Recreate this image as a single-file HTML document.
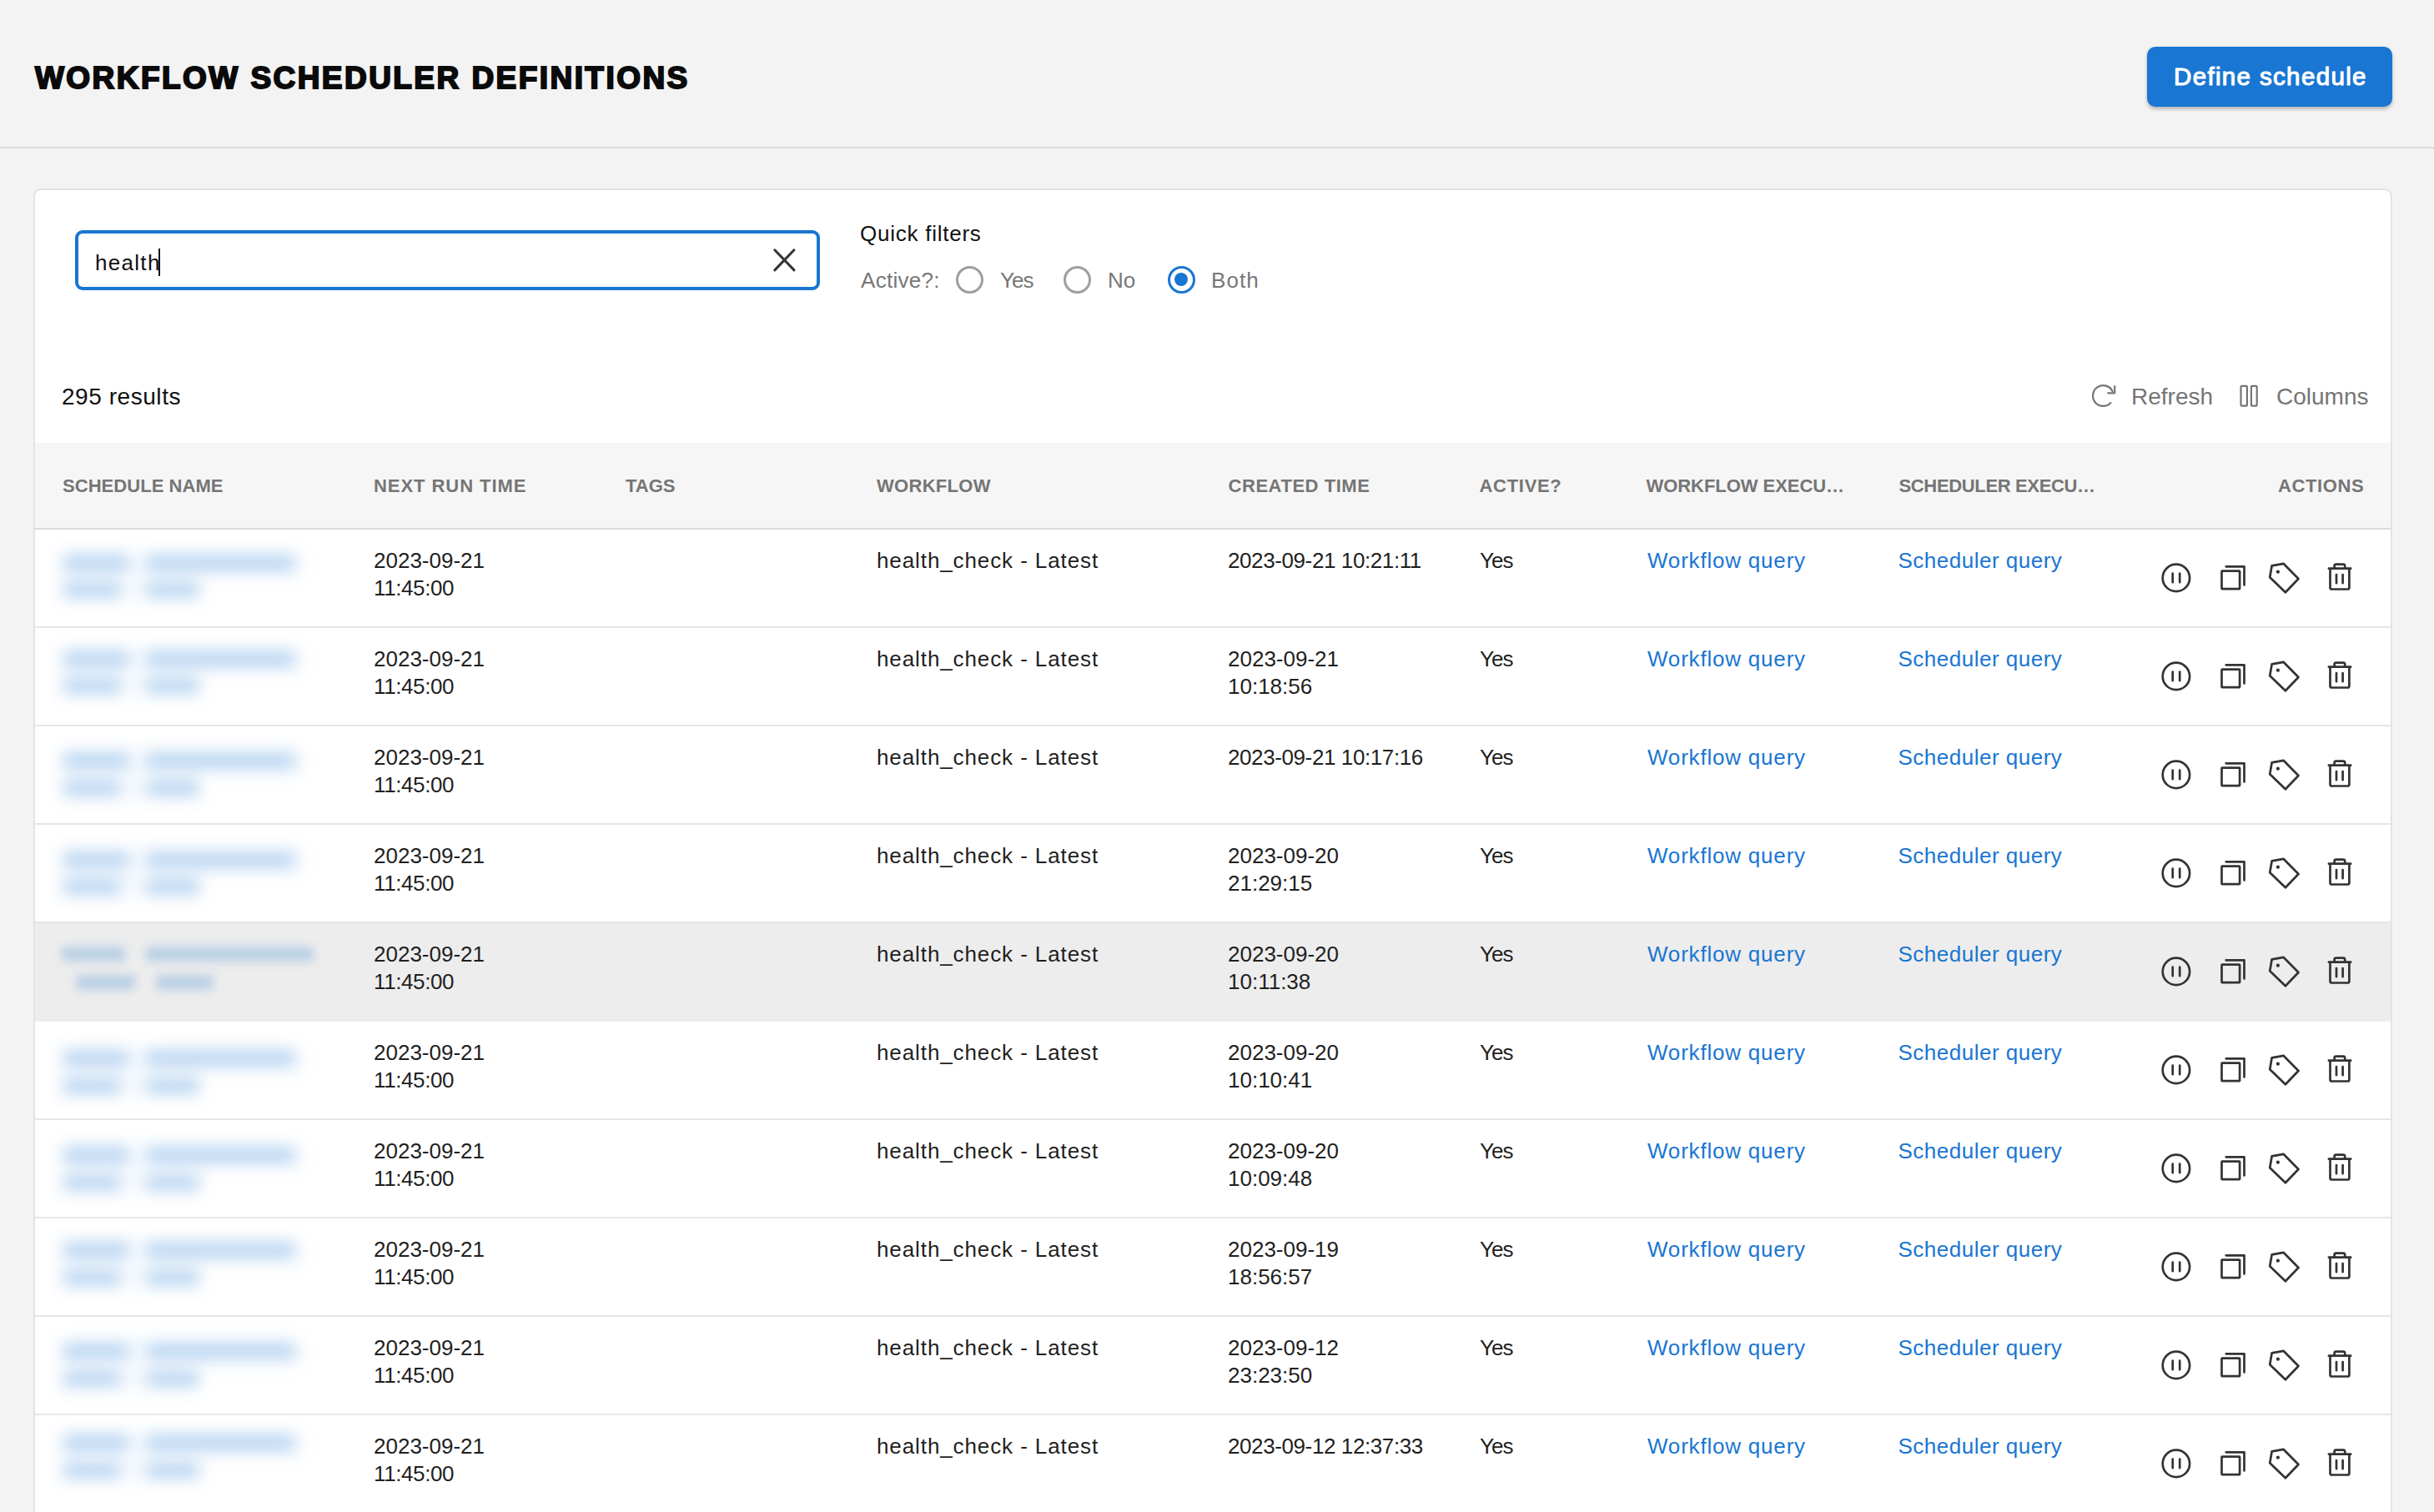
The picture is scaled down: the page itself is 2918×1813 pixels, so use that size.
<!DOCTYPE html>
<html><head><meta charset="utf-8"><title>Workflow Scheduler Definitions</title>
<style>
html,body{margin:0;padding:0;}
body{width:2918px;height:1813px;overflow:hidden;position:relative;background:#f3f3f3;font-family:"Liberation Sans", sans-serif;}
.t{position:absolute;white-space:nowrap;line-height:1;}
</style></head><body>
<div style="position:absolute;left:0px;top:0px;width:2918px;height:176px;background:#f3f3f3"></div><div style="position:absolute;left:0px;top:176px;width:2918px;height:2px;background:#dadada"></div><div class="t" style="left:42.0px;top:74.7px;font-size:37px;color:#0a0a0a;font-weight:bold;letter-spacing:2.45px;-webkit-text-stroke:2px #0a0a0a;">WORKFLOW SCHEDULER DEFINITIONS</div><div style="position:absolute;left:2574px;top:56px;width:294px;height:72px;background:#1976d2;border-radius:10px;box-shadow:0 3px 4px rgba(0,0,0,0.25)"></div><div class="t" style="left:2606.0px;top:77.3px;font-size:29.5px;color:#ffffff;font-weight:normal;letter-spacing:1.35px;-webkit-text-stroke:1.1px #fff;">Define schedule</div><div style="position:absolute;left:40px;top:226px;width:2828px;height:1700px;background:#fff;border:2px solid #e3e3e3;border-radius:9px;box-sizing:border-box"></div><div style="position:absolute;left:90px;top:276px;width:893px;height:72px;border:4px solid #1976d2;border-radius:9px;box-sizing:border-box;background:#fff"></div><div class="t" style="left:114.0px;top:302.0px;font-size:26px;color:#111;font-weight:normal;letter-spacing:1.3px;">health</div><div style="position:absolute;left:189.5px;top:298px;width:2.5px;height:33px;background:#111"></div><svg style="position:absolute;left:0;top:0" width="2918" height="1813" viewBox="0 0 2918 1813"><g stroke="#333" stroke-width="3" stroke-linecap="round" fill="none"><path d="M928.8 299.8 L952 323.9 M952 299.8 L928.8 323.9"/></g></svg><div class="t" style="left:1031.0px;top:266.6px;font-size:26px;color:#111;font-weight:normal;letter-spacing:0.75px;">Quick filters</div><div class="t" style="left:1032.0px;top:323.0px;font-size:26px;color:#777;font-weight:normal;letter-spacing:0.3px;">Active?:</div><div style="position:absolute;left:1145.5px;top:318.5px;width:33px;height:33px;border:3px solid #9e9e9e;border-radius:50%;box-sizing:border-box"></div><div class="t" style="left:1199.0px;top:323.0px;font-size:26px;color:#777;font-weight:normal;letter-spacing:-1px;">Yes</div><div style="position:absolute;left:1274.5px;top:318.5px;width:33px;height:33px;border:3px solid #9e9e9e;border-radius:50%;box-sizing:border-box"></div><div class="t" style="left:1328.0px;top:323.0px;font-size:26px;color:#777;font-weight:normal;letter-spacing:0px;">No</div><div style="position:absolute;left:1399.5px;top:318.5px;width:33px;height:33px;border:3px solid #1976d2;border-radius:50%;box-sizing:border-box"></div><div style="position:absolute;left:1408px;top:327px;width:16px;height:16px;background:#1976d2;border-radius:50%"></div><div class="t" style="left:1452.0px;top:323.0px;font-size:26px;color:#777;font-weight:normal;letter-spacing:1.1px;">Both</div><div class="t" style="left:74.0px;top:461.6px;font-size:28px;color:#111;font-weight:normal;letter-spacing:0.55px;">295 results</div><svg style="position:absolute;left:0;top:0" width="2918" height="1813" viewBox="0 0 2918 1813"><g stroke="#757575" stroke-width="2.2" stroke-linecap="round" stroke-linejoin="round" fill="none"><path d="M2530.4 483.1 A12.4 12.4 0 1 1 2532.6 469.2"/><path d="M2535.2 463.2 V471.3 H2527.1"/><rect x="2686.5" y="462.9" width="7.4" height="23.8" rx="1.2"/><rect x="2698.9" y="462.9" width="6.8" height="23.8" rx="1.2"/></g></svg><div class="t" style="left:2555.0px;top:462.0px;font-size:28px;color:#757575;font-weight:normal;letter-spacing:0px;">Refresh</div><div class="t" style="left:2729.0px;top:462.0px;font-size:28px;color:#757575;font-weight:normal;letter-spacing:0px;">Columns</div><div style="position:absolute;left:42px;top:531px;width:2824px;height:102px;background:#f6f6f6"></div><div style="position:absolute;left:42px;top:633px;width:2824px;height:2px;background:#d9d9d9"></div><div class="t" style="left:75.0px;top:571.6px;font-size:22px;color:#757575;font-weight:bold;letter-spacing:0.05px;">SCHEDULE NAME</div><div class="t" style="left:448.0px;top:571.6px;font-size:22px;color:#757575;font-weight:bold;letter-spacing:0.95px;">NEXT RUN TIME</div><div class="t" style="left:750.0px;top:571.6px;font-size:22px;color:#757575;font-weight:bold;letter-spacing:0.0px;">TAGS</div><div class="t" style="left:1051.0px;top:571.6px;font-size:22px;color:#757575;font-weight:bold;letter-spacing:0.3px;">WORKFLOW</div><div class="t" style="left:1472.5px;top:571.6px;font-size:22px;color:#757575;font-weight:bold;letter-spacing:0.55px;">CREATED TIME</div><div class="t" style="left:1773.5px;top:571.6px;font-size:22px;color:#757575;font-weight:bold;letter-spacing:0.7px;">ACTIVE?</div><div class="t" style="left:1973.5px;top:571.6px;font-size:22px;color:#757575;font-weight:bold;letter-spacing:-0.05px;">WORKFLOW EXECU…</div><div class="t" style="left:2276.5px;top:571.6px;font-size:22px;color:#757575;font-weight:bold;letter-spacing:-0.35px;">SCHEDULER EXECU…</div><div class="t" style="left:2731.0px;top:571.6px;font-size:22px;color:#757575;font-weight:bold;letter-spacing:0.6px;">ACTIONS</div><div style="position:absolute;left:42px;top:751px;width:2824px;height:2px;background:#e6e6e6"></div><div style="position:absolute;left:72px;top:661px;width:290px;height:30px;background:rgba(25,118,210,0.05);filter:blur(10px)"></div><div style="position:absolute;left:72px;top:695px;width:170px;height:26px;background:rgba(25,118,210,0.045);filter:blur(10px)"></div><div style="position:absolute;left:76px;top:666px;width:78px;height:18px;background:rgba(25,118,210,0.27);filter:blur(9px);border-radius:4px"></div><div style="position:absolute;left:176px;top:666px;width:177px;height:18px;background:rgba(25,118,210,0.27);filter:blur(9px);border-radius:4px"></div><div style="position:absolute;left:76px;top:698px;width:68px;height:18px;background:rgba(25,118,210,0.27);filter:blur(9px);border-radius:4px"></div><div style="position:absolute;left:176px;top:698px;width:62px;height:18px;background:rgba(25,118,210,0.27);filter:blur(9px);border-radius:4px"></div><div class="t" style="left:448.0px;top:659.0px;font-size:26px;color:#1f1f1f;font-weight:normal;letter-spacing:0px;">2023-09-21</div><div class="t" style="left:448.0px;top:692.0px;font-size:26px;color:#1f1f1f;font-weight:normal;letter-spacing:-0.4px;">11:45:00</div><div class="t" style="left:1051.0px;top:659.0px;font-size:26px;color:#1f1f1f;font-weight:normal;letter-spacing:0.9px;">health_check - Latest</div><div class="t" style="left:1472.0px;top:659.0px;font-size:26px;color:#1f1f1f;font-weight:normal;letter-spacing:-0.4px;">2023-09-21 10:21:11</div><div class="t" style="left:1774.0px;top:659.0px;font-size:26px;color:#1f1f1f;font-weight:normal;letter-spacing:-1px;">Yes</div><div class="t" style="left:1975.0px;top:659.0px;font-size:26px;color:#1976d2;font-weight:normal;letter-spacing:0.8px;">Workflow query</div><div class="t" style="left:2275.5px;top:659.0px;font-size:26px;color:#1976d2;font-weight:normal;letter-spacing:0.5px;">Scheduler query</div><div style="position:absolute;left:42px;top:869px;width:2824px;height:2px;background:#e6e6e6"></div><div style="position:absolute;left:72px;top:776px;width:290px;height:30px;background:rgba(25,118,210,0.05);filter:blur(10px)"></div><div style="position:absolute;left:72px;top:810px;width:170px;height:26px;background:rgba(25,118,210,0.045);filter:blur(10px)"></div><div style="position:absolute;left:76px;top:781px;width:78px;height:18px;background:rgba(25,118,210,0.27);filter:blur(9px);border-radius:4px"></div><div style="position:absolute;left:176px;top:781px;width:177px;height:18px;background:rgba(25,118,210,0.27);filter:blur(9px);border-radius:4px"></div><div style="position:absolute;left:76px;top:813px;width:68px;height:18px;background:rgba(25,118,210,0.27);filter:blur(9px);border-radius:4px"></div><div style="position:absolute;left:176px;top:813px;width:62px;height:18px;background:rgba(25,118,210,0.27);filter:blur(9px);border-radius:4px"></div><div class="t" style="left:448.0px;top:777.0px;font-size:26px;color:#1f1f1f;font-weight:normal;letter-spacing:0px;">2023-09-21</div><div class="t" style="left:448.0px;top:810.0px;font-size:26px;color:#1f1f1f;font-weight:normal;letter-spacing:-0.4px;">11:45:00</div><div class="t" style="left:1051.0px;top:777.0px;font-size:26px;color:#1f1f1f;font-weight:normal;letter-spacing:0.9px;">health_check - Latest</div><div class="t" style="left:1472.0px;top:777.0px;font-size:26px;color:#1f1f1f;font-weight:normal;letter-spacing:0px;">2023-09-21</div><div class="t" style="left:1472.0px;top:810.0px;font-size:26px;color:#1f1f1f;font-weight:normal;letter-spacing:0px;">10:18:56</div><div class="t" style="left:1774.0px;top:777.0px;font-size:26px;color:#1f1f1f;font-weight:normal;letter-spacing:-1px;">Yes</div><div class="t" style="left:1975.0px;top:777.0px;font-size:26px;color:#1976d2;font-weight:normal;letter-spacing:0.8px;">Workflow query</div><div class="t" style="left:2275.5px;top:777.0px;font-size:26px;color:#1976d2;font-weight:normal;letter-spacing:0.5px;">Scheduler query</div><div style="position:absolute;left:42px;top:987px;width:2824px;height:2px;background:#e6e6e6"></div><div style="position:absolute;left:72px;top:897.5px;width:290px;height:30px;background:rgba(25,118,210,0.05);filter:blur(10px)"></div><div style="position:absolute;left:72px;top:933px;width:170px;height:26px;background:rgba(25,118,210,0.045);filter:blur(10px)"></div><div style="position:absolute;left:76px;top:902.5px;width:78px;height:18px;background:rgba(25,118,210,0.27);filter:blur(9px);border-radius:4px"></div><div style="position:absolute;left:176px;top:902.5px;width:177px;height:18px;background:rgba(25,118,210,0.27);filter:blur(9px);border-radius:4px"></div><div style="position:absolute;left:76px;top:936px;width:68px;height:18px;background:rgba(25,118,210,0.27);filter:blur(9px);border-radius:4px"></div><div style="position:absolute;left:176px;top:936px;width:62px;height:18px;background:rgba(25,118,210,0.27);filter:blur(9px);border-radius:4px"></div><div class="t" style="left:448.0px;top:895.0px;font-size:26px;color:#1f1f1f;font-weight:normal;letter-spacing:0px;">2023-09-21</div><div class="t" style="left:448.0px;top:928.0px;font-size:26px;color:#1f1f1f;font-weight:normal;letter-spacing:-0.4px;">11:45:00</div><div class="t" style="left:1051.0px;top:895.0px;font-size:26px;color:#1f1f1f;font-weight:normal;letter-spacing:0.9px;">health_check - Latest</div><div class="t" style="left:1472.0px;top:895.0px;font-size:26px;color:#1f1f1f;font-weight:normal;letter-spacing:-0.4px;">2023-09-21 10:17:16</div><div class="t" style="left:1774.0px;top:895.0px;font-size:26px;color:#1f1f1f;font-weight:normal;letter-spacing:-1px;">Yes</div><div class="t" style="left:1975.0px;top:895.0px;font-size:26px;color:#1976d2;font-weight:normal;letter-spacing:0.8px;">Workflow query</div><div class="t" style="left:2275.5px;top:895.0px;font-size:26px;color:#1976d2;font-weight:normal;letter-spacing:0.5px;">Scheduler query</div><div style="position:absolute;left:42px;top:1105px;width:2824px;height:2px;background:#e6e6e6"></div><div style="position:absolute;left:72px;top:1017px;width:290px;height:30px;background:rgba(25,118,210,0.05);filter:blur(10px)"></div><div style="position:absolute;left:72px;top:1051px;width:170px;height:26px;background:rgba(25,118,210,0.045);filter:blur(10px)"></div><div style="position:absolute;left:76px;top:1022px;width:78px;height:18px;background:rgba(25,118,210,0.27);filter:blur(9px);border-radius:4px"></div><div style="position:absolute;left:176px;top:1022px;width:177px;height:18px;background:rgba(25,118,210,0.27);filter:blur(9px);border-radius:4px"></div><div style="position:absolute;left:76px;top:1054px;width:68px;height:18px;background:rgba(25,118,210,0.27);filter:blur(9px);border-radius:4px"></div><div style="position:absolute;left:176px;top:1054px;width:62px;height:18px;background:rgba(25,118,210,0.27);filter:blur(9px);border-radius:4px"></div><div class="t" style="left:448.0px;top:1013.0px;font-size:26px;color:#1f1f1f;font-weight:normal;letter-spacing:0px;">2023-09-21</div><div class="t" style="left:448.0px;top:1046.0px;font-size:26px;color:#1f1f1f;font-weight:normal;letter-spacing:-0.4px;">11:45:00</div><div class="t" style="left:1051.0px;top:1013.0px;font-size:26px;color:#1f1f1f;font-weight:normal;letter-spacing:0.9px;">health_check - Latest</div><div class="t" style="left:1472.0px;top:1013.0px;font-size:26px;color:#1f1f1f;font-weight:normal;letter-spacing:0px;">2023-09-20</div><div class="t" style="left:1472.0px;top:1046.0px;font-size:26px;color:#1f1f1f;font-weight:normal;letter-spacing:0px;">21:29:15</div><div class="t" style="left:1774.0px;top:1013.0px;font-size:26px;color:#1f1f1f;font-weight:normal;letter-spacing:-1px;">Yes</div><div class="t" style="left:1975.0px;top:1013.0px;font-size:26px;color:#1976d2;font-weight:normal;letter-spacing:0.8px;">Workflow query</div><div class="t" style="left:2275.5px;top:1013.0px;font-size:26px;color:#1976d2;font-weight:normal;letter-spacing:0.5px;">Scheduler query</div><div style="position:absolute;left:42px;top:1107px;width:2824px;height:118px;background:#ededed"></div><div style="position:absolute;left:74px;top:1135px;width:76px;height:18px;background:rgba(25,118,210,0.24);filter:blur(6px);border-radius:4px"></div><div style="position:absolute;left:175px;top:1135px;width:201px;height:18px;background:rgba(25,118,210,0.24);filter:blur(6px);border-radius:4px"></div><div style="position:absolute;left:91px;top:1168.5px;width:71px;height:18px;background:rgba(25,118,210,0.24);filter:blur(6px);border-radius:4px"></div><div style="position:absolute;left:187px;top:1168.5px;width:69px;height:18px;background:rgba(25,118,210,0.24);filter:blur(6px);border-radius:4px"></div><div class="t" style="left:448.0px;top:1131.0px;font-size:26px;color:#1f1f1f;font-weight:normal;letter-spacing:0px;">2023-09-21</div><div class="t" style="left:448.0px;top:1164.0px;font-size:26px;color:#1f1f1f;font-weight:normal;letter-spacing:-0.4px;">11:45:00</div><div class="t" style="left:1051.0px;top:1131.0px;font-size:26px;color:#1f1f1f;font-weight:normal;letter-spacing:0.9px;">health_check - Latest</div><div class="t" style="left:1472.0px;top:1131.0px;font-size:26px;color:#1f1f1f;font-weight:normal;letter-spacing:0px;">2023-09-20</div><div class="t" style="left:1472.0px;top:1164.0px;font-size:26px;color:#1f1f1f;font-weight:normal;letter-spacing:0px;">10:11:38</div><div class="t" style="left:1774.0px;top:1131.0px;font-size:26px;color:#1f1f1f;font-weight:normal;letter-spacing:-1px;">Yes</div><div class="t" style="left:1975.0px;top:1131.0px;font-size:26px;color:#1976d2;font-weight:normal;letter-spacing:0.8px;">Workflow query</div><div class="t" style="left:2275.5px;top:1131.0px;font-size:26px;color:#1976d2;font-weight:normal;letter-spacing:0.5px;">Scheduler query</div><div style="position:absolute;left:42px;top:1341px;width:2824px;height:2px;background:#e6e6e6"></div><div style="position:absolute;left:72px;top:1255px;width:290px;height:30px;background:rgba(25,118,210,0.05);filter:blur(10px)"></div><div style="position:absolute;left:72px;top:1290px;width:170px;height:26px;background:rgba(25,118,210,0.045);filter:blur(10px)"></div><div style="position:absolute;left:76px;top:1260px;width:78px;height:18px;background:rgba(25,118,210,0.27);filter:blur(9px);border-radius:4px"></div><div style="position:absolute;left:176px;top:1260px;width:177px;height:18px;background:rgba(25,118,210,0.27);filter:blur(9px);border-radius:4px"></div><div style="position:absolute;left:76px;top:1293px;width:68px;height:18px;background:rgba(25,118,210,0.27);filter:blur(9px);border-radius:4px"></div><div style="position:absolute;left:176px;top:1293px;width:62px;height:18px;background:rgba(25,118,210,0.27);filter:blur(9px);border-radius:4px"></div><div class="t" style="left:448.0px;top:1249.0px;font-size:26px;color:#1f1f1f;font-weight:normal;letter-spacing:0px;">2023-09-21</div><div class="t" style="left:448.0px;top:1282.0px;font-size:26px;color:#1f1f1f;font-weight:normal;letter-spacing:-0.4px;">11:45:00</div><div class="t" style="left:1051.0px;top:1249.0px;font-size:26px;color:#1f1f1f;font-weight:normal;letter-spacing:0.9px;">health_check - Latest</div><div class="t" style="left:1472.0px;top:1249.0px;font-size:26px;color:#1f1f1f;font-weight:normal;letter-spacing:0px;">2023-09-20</div><div class="t" style="left:1472.0px;top:1282.0px;font-size:26px;color:#1f1f1f;font-weight:normal;letter-spacing:0px;">10:10:41</div><div class="t" style="left:1774.0px;top:1249.0px;font-size:26px;color:#1f1f1f;font-weight:normal;letter-spacing:-1px;">Yes</div><div class="t" style="left:1975.0px;top:1249.0px;font-size:26px;color:#1976d2;font-weight:normal;letter-spacing:0.8px;">Workflow query</div><div class="t" style="left:2275.5px;top:1249.0px;font-size:26px;color:#1976d2;font-weight:normal;letter-spacing:0.5px;">Scheduler query</div><div style="position:absolute;left:42px;top:1459px;width:2824px;height:2px;background:#e6e6e6"></div><div style="position:absolute;left:72px;top:1371px;width:290px;height:30px;background:rgba(25,118,210,0.05);filter:blur(10px)"></div><div style="position:absolute;left:72px;top:1406.4px;width:170px;height:26px;background:rgba(25,118,210,0.045);filter:blur(10px)"></div><div style="position:absolute;left:76px;top:1376px;width:78px;height:18px;background:rgba(25,118,210,0.27);filter:blur(9px);border-radius:4px"></div><div style="position:absolute;left:176px;top:1376px;width:177px;height:18px;background:rgba(25,118,210,0.27);filter:blur(9px);border-radius:4px"></div><div style="position:absolute;left:76px;top:1409.4px;width:68px;height:18px;background:rgba(25,118,210,0.27);filter:blur(9px);border-radius:4px"></div><div style="position:absolute;left:176px;top:1409.4px;width:62px;height:18px;background:rgba(25,118,210,0.27);filter:blur(9px);border-radius:4px"></div><div class="t" style="left:448.0px;top:1367.0px;font-size:26px;color:#1f1f1f;font-weight:normal;letter-spacing:0px;">2023-09-21</div><div class="t" style="left:448.0px;top:1400.0px;font-size:26px;color:#1f1f1f;font-weight:normal;letter-spacing:-0.4px;">11:45:00</div><div class="t" style="left:1051.0px;top:1367.0px;font-size:26px;color:#1f1f1f;font-weight:normal;letter-spacing:0.9px;">health_check - Latest</div><div class="t" style="left:1472.0px;top:1367.0px;font-size:26px;color:#1f1f1f;font-weight:normal;letter-spacing:0px;">2023-09-20</div><div class="t" style="left:1472.0px;top:1400.0px;font-size:26px;color:#1f1f1f;font-weight:normal;letter-spacing:0px;">10:09:48</div><div class="t" style="left:1774.0px;top:1367.0px;font-size:26px;color:#1f1f1f;font-weight:normal;letter-spacing:-1px;">Yes</div><div class="t" style="left:1975.0px;top:1367.0px;font-size:26px;color:#1976d2;font-weight:normal;letter-spacing:0.8px;">Workflow query</div><div class="t" style="left:2275.5px;top:1367.0px;font-size:26px;color:#1976d2;font-weight:normal;letter-spacing:0.5px;">Scheduler query</div><div style="position:absolute;left:42px;top:1577px;width:2824px;height:2px;background:#e6e6e6"></div><div style="position:absolute;left:72px;top:1484.7px;width:290px;height:30px;background:rgba(25,118,210,0.05);filter:blur(10px)"></div><div style="position:absolute;left:72px;top:1520.2px;width:170px;height:26px;background:rgba(25,118,210,0.045);filter:blur(10px)"></div><div style="position:absolute;left:76px;top:1489.7px;width:78px;height:18px;background:rgba(25,118,210,0.27);filter:blur(9px);border-radius:4px"></div><div style="position:absolute;left:176px;top:1489.7px;width:177px;height:18px;background:rgba(25,118,210,0.27);filter:blur(9px);border-radius:4px"></div><div style="position:absolute;left:76px;top:1523.2px;width:68px;height:18px;background:rgba(25,118,210,0.27);filter:blur(9px);border-radius:4px"></div><div style="position:absolute;left:176px;top:1523.2px;width:62px;height:18px;background:rgba(25,118,210,0.27);filter:blur(9px);border-radius:4px"></div><div class="t" style="left:448.0px;top:1485.0px;font-size:26px;color:#1f1f1f;font-weight:normal;letter-spacing:0px;">2023-09-21</div><div class="t" style="left:448.0px;top:1518.0px;font-size:26px;color:#1f1f1f;font-weight:normal;letter-spacing:-0.4px;">11:45:00</div><div class="t" style="left:1051.0px;top:1485.0px;font-size:26px;color:#1f1f1f;font-weight:normal;letter-spacing:0.9px;">health_check - Latest</div><div class="t" style="left:1472.0px;top:1485.0px;font-size:26px;color:#1f1f1f;font-weight:normal;letter-spacing:0px;">2023-09-19</div><div class="t" style="left:1472.0px;top:1518.0px;font-size:26px;color:#1f1f1f;font-weight:normal;letter-spacing:0px;">18:56:57</div><div class="t" style="left:1774.0px;top:1485.0px;font-size:26px;color:#1f1f1f;font-weight:normal;letter-spacing:-1px;">Yes</div><div class="t" style="left:1975.0px;top:1485.0px;font-size:26px;color:#1976d2;font-weight:normal;letter-spacing:0.8px;">Workflow query</div><div class="t" style="left:2275.5px;top:1485.0px;font-size:26px;color:#1976d2;font-weight:normal;letter-spacing:0.5px;">Scheduler query</div><div style="position:absolute;left:42px;top:1695px;width:2824px;height:2px;background:#e6e6e6"></div><div style="position:absolute;left:72px;top:1605.5px;width:290px;height:30px;background:rgba(25,118,210,0.05);filter:blur(10px)"></div><div style="position:absolute;left:72px;top:1641px;width:170px;height:26px;background:rgba(25,118,210,0.045);filter:blur(10px)"></div><div style="position:absolute;left:76px;top:1610.5px;width:78px;height:18px;background:rgba(25,118,210,0.27);filter:blur(9px);border-radius:4px"></div><div style="position:absolute;left:176px;top:1610.5px;width:177px;height:18px;background:rgba(25,118,210,0.27);filter:blur(9px);border-radius:4px"></div><div style="position:absolute;left:76px;top:1644px;width:68px;height:18px;background:rgba(25,118,210,0.27);filter:blur(9px);border-radius:4px"></div><div style="position:absolute;left:176px;top:1644px;width:62px;height:18px;background:rgba(25,118,210,0.27);filter:blur(9px);border-radius:4px"></div><div class="t" style="left:448.0px;top:1603.0px;font-size:26px;color:#1f1f1f;font-weight:normal;letter-spacing:0px;">2023-09-21</div><div class="t" style="left:448.0px;top:1636.0px;font-size:26px;color:#1f1f1f;font-weight:normal;letter-spacing:-0.4px;">11:45:00</div><div class="t" style="left:1051.0px;top:1603.0px;font-size:26px;color:#1f1f1f;font-weight:normal;letter-spacing:0.9px;">health_check - Latest</div><div class="t" style="left:1472.0px;top:1603.0px;font-size:26px;color:#1f1f1f;font-weight:normal;letter-spacing:0px;">2023-09-12</div><div class="t" style="left:1472.0px;top:1636.0px;font-size:26px;color:#1f1f1f;font-weight:normal;letter-spacing:0px;">23:23:50</div><div class="t" style="left:1774.0px;top:1603.0px;font-size:26px;color:#1f1f1f;font-weight:normal;letter-spacing:-1px;">Yes</div><div class="t" style="left:1975.0px;top:1603.0px;font-size:26px;color:#1976d2;font-weight:normal;letter-spacing:0.8px;">Workflow query</div><div class="t" style="left:2275.5px;top:1603.0px;font-size:26px;color:#1976d2;font-weight:normal;letter-spacing:0.5px;">Scheduler query</div><div style="position:absolute;left:42px;top:1813px;width:2824px;height:2px;background:#e6e6e6"></div><div style="position:absolute;left:72px;top:1716px;width:290px;height:30px;background:rgba(25,118,210,0.05);filter:blur(10px)"></div><div style="position:absolute;left:72px;top:1751px;width:170px;height:26px;background:rgba(25,118,210,0.045);filter:blur(10px)"></div><div style="position:absolute;left:76px;top:1721px;width:78px;height:18px;background:rgba(25,118,210,0.27);filter:blur(9px);border-radius:4px"></div><div style="position:absolute;left:176px;top:1721px;width:177px;height:18px;background:rgba(25,118,210,0.27);filter:blur(9px);border-radius:4px"></div><div style="position:absolute;left:76px;top:1754px;width:68px;height:18px;background:rgba(25,118,210,0.27);filter:blur(9px);border-radius:4px"></div><div style="position:absolute;left:176px;top:1754px;width:62px;height:18px;background:rgba(25,118,210,0.27);filter:blur(9px);border-radius:4px"></div><div class="t" style="left:448.0px;top:1721.0px;font-size:26px;color:#1f1f1f;font-weight:normal;letter-spacing:0px;">2023-09-21</div><div class="t" style="left:448.0px;top:1754.0px;font-size:26px;color:#1f1f1f;font-weight:normal;letter-spacing:-0.4px;">11:45:00</div><div class="t" style="left:1051.0px;top:1721.0px;font-size:26px;color:#1f1f1f;font-weight:normal;letter-spacing:0.9px;">health_check - Latest</div><div class="t" style="left:1472.0px;top:1721.0px;font-size:26px;color:#1f1f1f;font-weight:normal;letter-spacing:-0.4px;">2023-09-12 12:37:33</div><div class="t" style="left:1774.0px;top:1721.0px;font-size:26px;color:#1f1f1f;font-weight:normal;letter-spacing:-1px;">Yes</div><div class="t" style="left:1975.0px;top:1721.0px;font-size:26px;color:#1976d2;font-weight:normal;letter-spacing:0.8px;">Workflow query</div><div class="t" style="left:2275.5px;top:1721.0px;font-size:26px;color:#1976d2;font-weight:normal;letter-spacing:0.5px;">Scheduler query</div><svg style="position:absolute;left:0;top:0" width="2918" height="1813" viewBox="0 0 2918 1813"><g stroke="#333" stroke-width="2.7" stroke-linecap="round" stroke-linejoin="round" fill="none"><g transform="translate(0 0.0)"><circle cx="2608.9" cy="692.9" r="16.2"/><path d="M2604.7 687.7 V698.2 M2613.2 687.7 V698.2"/><rect x="2663.5" y="684.6" width="21.6" height="21.6" rx="0.6"/><path d="M2668.7 679.3 H2690.5 V701.5"/><path d="M2723.6 678.4 L2737.5 675.8 L2755.5 694 L2739.9 710.3 L2721.2 692.3 Z"/><circle cx="2730.9" cy="685.7" r="2.1" fill="#333" stroke="none"/><path d="M2791.9 681.7 H2818.2 M2798.6 681.7 V678.6 Q2798.6 676.6 2800.6 676.6 H2809.2 Q2811.2 676.6 2811.2 678.6 V681.7 M2793.5 681.7 V704.5 Q2793.5 706.5 2795.5 706.5 H2814.4 Q2816.4 706.5 2816.4 704.5 V681.7 M2801 689 V699.2 M2808.6 689 V699.2"/></g><g transform="translate(0 118.0)"><circle cx="2608.9" cy="692.9" r="16.2"/><path d="M2604.7 687.7 V698.2 M2613.2 687.7 V698.2"/><rect x="2663.5" y="684.6" width="21.6" height="21.6" rx="0.6"/><path d="M2668.7 679.3 H2690.5 V701.5"/><path d="M2723.6 678.4 L2737.5 675.8 L2755.5 694 L2739.9 710.3 L2721.2 692.3 Z"/><circle cx="2730.9" cy="685.7" r="2.1" fill="#333" stroke="none"/><path d="M2791.9 681.7 H2818.2 M2798.6 681.7 V678.6 Q2798.6 676.6 2800.6 676.6 H2809.2 Q2811.2 676.6 2811.2 678.6 V681.7 M2793.5 681.7 V704.5 Q2793.5 706.5 2795.5 706.5 H2814.4 Q2816.4 706.5 2816.4 704.5 V681.7 M2801 689 V699.2 M2808.6 689 V699.2"/></g><g transform="translate(0 236.0)"><circle cx="2608.9" cy="692.9" r="16.2"/><path d="M2604.7 687.7 V698.2 M2613.2 687.7 V698.2"/><rect x="2663.5" y="684.6" width="21.6" height="21.6" rx="0.6"/><path d="M2668.7 679.3 H2690.5 V701.5"/><path d="M2723.6 678.4 L2737.5 675.8 L2755.5 694 L2739.9 710.3 L2721.2 692.3 Z"/><circle cx="2730.9" cy="685.7" r="2.1" fill="#333" stroke="none"/><path d="M2791.9 681.7 H2818.2 M2798.6 681.7 V678.6 Q2798.6 676.6 2800.6 676.6 H2809.2 Q2811.2 676.6 2811.2 678.6 V681.7 M2793.5 681.7 V704.5 Q2793.5 706.5 2795.5 706.5 H2814.4 Q2816.4 706.5 2816.4 704.5 V681.7 M2801 689 V699.2 M2808.6 689 V699.2"/></g><g transform="translate(0 354.0)"><circle cx="2608.9" cy="692.9" r="16.2"/><path d="M2604.7 687.7 V698.2 M2613.2 687.7 V698.2"/><rect x="2663.5" y="684.6" width="21.6" height="21.6" rx="0.6"/><path d="M2668.7 679.3 H2690.5 V701.5"/><path d="M2723.6 678.4 L2737.5 675.8 L2755.5 694 L2739.9 710.3 L2721.2 692.3 Z"/><circle cx="2730.9" cy="685.7" r="2.1" fill="#333" stroke="none"/><path d="M2791.9 681.7 H2818.2 M2798.6 681.7 V678.6 Q2798.6 676.6 2800.6 676.6 H2809.2 Q2811.2 676.6 2811.2 678.6 V681.7 M2793.5 681.7 V704.5 Q2793.5 706.5 2795.5 706.5 H2814.4 Q2816.4 706.5 2816.4 704.5 V681.7 M2801 689 V699.2 M2808.6 689 V699.2"/></g><g transform="translate(0 472.0)"><circle cx="2608.9" cy="692.9" r="16.2"/><path d="M2604.7 687.7 V698.2 M2613.2 687.7 V698.2"/><rect x="2663.5" y="684.6" width="21.6" height="21.6" rx="0.6"/><path d="M2668.7 679.3 H2690.5 V701.5"/><path d="M2723.6 678.4 L2737.5 675.8 L2755.5 694 L2739.9 710.3 L2721.2 692.3 Z"/><circle cx="2730.9" cy="685.7" r="2.1" fill="#333" stroke="none"/><path d="M2791.9 681.7 H2818.2 M2798.6 681.7 V678.6 Q2798.6 676.6 2800.6 676.6 H2809.2 Q2811.2 676.6 2811.2 678.6 V681.7 M2793.5 681.7 V704.5 Q2793.5 706.5 2795.5 706.5 H2814.4 Q2816.4 706.5 2816.4 704.5 V681.7 M2801 689 V699.2 M2808.6 689 V699.2"/></g><g transform="translate(0 590.0)"><circle cx="2608.9" cy="692.9" r="16.2"/><path d="M2604.7 687.7 V698.2 M2613.2 687.7 V698.2"/><rect x="2663.5" y="684.6" width="21.6" height="21.6" rx="0.6"/><path d="M2668.7 679.3 H2690.5 V701.5"/><path d="M2723.6 678.4 L2737.5 675.8 L2755.5 694 L2739.9 710.3 L2721.2 692.3 Z"/><circle cx="2730.9" cy="685.7" r="2.1" fill="#333" stroke="none"/><path d="M2791.9 681.7 H2818.2 M2798.6 681.7 V678.6 Q2798.6 676.6 2800.6 676.6 H2809.2 Q2811.2 676.6 2811.2 678.6 V681.7 M2793.5 681.7 V704.5 Q2793.5 706.5 2795.5 706.5 H2814.4 Q2816.4 706.5 2816.4 704.5 V681.7 M2801 689 V699.2 M2808.6 689 V699.2"/></g><g transform="translate(0 708.0)"><circle cx="2608.9" cy="692.9" r="16.2"/><path d="M2604.7 687.7 V698.2 M2613.2 687.7 V698.2"/><rect x="2663.5" y="684.6" width="21.6" height="21.6" rx="0.6"/><path d="M2668.7 679.3 H2690.5 V701.5"/><path d="M2723.6 678.4 L2737.5 675.8 L2755.5 694 L2739.9 710.3 L2721.2 692.3 Z"/><circle cx="2730.9" cy="685.7" r="2.1" fill="#333" stroke="none"/><path d="M2791.9 681.7 H2818.2 M2798.6 681.7 V678.6 Q2798.6 676.6 2800.6 676.6 H2809.2 Q2811.2 676.6 2811.2 678.6 V681.7 M2793.5 681.7 V704.5 Q2793.5 706.5 2795.5 706.5 H2814.4 Q2816.4 706.5 2816.4 704.5 V681.7 M2801 689 V699.2 M2808.6 689 V699.2"/></g><g transform="translate(0 826.0)"><circle cx="2608.9" cy="692.9" r="16.2"/><path d="M2604.7 687.7 V698.2 M2613.2 687.7 V698.2"/><rect x="2663.5" y="684.6" width="21.6" height="21.6" rx="0.6"/><path d="M2668.7 679.3 H2690.5 V701.5"/><path d="M2723.6 678.4 L2737.5 675.8 L2755.5 694 L2739.9 710.3 L2721.2 692.3 Z"/><circle cx="2730.9" cy="685.7" r="2.1" fill="#333" stroke="none"/><path d="M2791.9 681.7 H2818.2 M2798.6 681.7 V678.6 Q2798.6 676.6 2800.6 676.6 H2809.2 Q2811.2 676.6 2811.2 678.6 V681.7 M2793.5 681.7 V704.5 Q2793.5 706.5 2795.5 706.5 H2814.4 Q2816.4 706.5 2816.4 704.5 V681.7 M2801 689 V699.2 M2808.6 689 V699.2"/></g><g transform="translate(0 944.0)"><circle cx="2608.9" cy="692.9" r="16.2"/><path d="M2604.7 687.7 V698.2 M2613.2 687.7 V698.2"/><rect x="2663.5" y="684.6" width="21.6" height="21.6" rx="0.6"/><path d="M2668.7 679.3 H2690.5 V701.5"/><path d="M2723.6 678.4 L2737.5 675.8 L2755.5 694 L2739.9 710.3 L2721.2 692.3 Z"/><circle cx="2730.9" cy="685.7" r="2.1" fill="#333" stroke="none"/><path d="M2791.9 681.7 H2818.2 M2798.6 681.7 V678.6 Q2798.6 676.6 2800.6 676.6 H2809.2 Q2811.2 676.6 2811.2 678.6 V681.7 M2793.5 681.7 V704.5 Q2793.5 706.5 2795.5 706.5 H2814.4 Q2816.4 706.5 2816.4 704.5 V681.7 M2801 689 V699.2 M2808.6 689 V699.2"/></g><g transform="translate(0 1062.0)"><circle cx="2608.9" cy="692.9" r="16.2"/><path d="M2604.7 687.7 V698.2 M2613.2 687.7 V698.2"/><rect x="2663.5" y="684.6" width="21.6" height="21.6" rx="0.6"/><path d="M2668.7 679.3 H2690.5 V701.5"/><path d="M2723.6 678.4 L2737.5 675.8 L2755.5 694 L2739.9 710.3 L2721.2 692.3 Z"/><circle cx="2730.9" cy="685.7" r="2.1" fill="#333" stroke="none"/><path d="M2791.9 681.7 H2818.2 M2798.6 681.7 V678.6 Q2798.6 676.6 2800.6 676.6 H2809.2 Q2811.2 676.6 2811.2 678.6 V681.7 M2793.5 681.7 V704.5 Q2793.5 706.5 2795.5 706.5 H2814.4 Q2816.4 706.5 2816.4 704.5 V681.7 M2801 689 V699.2 M2808.6 689 V699.2"/></g></g></svg>
</body></html>
